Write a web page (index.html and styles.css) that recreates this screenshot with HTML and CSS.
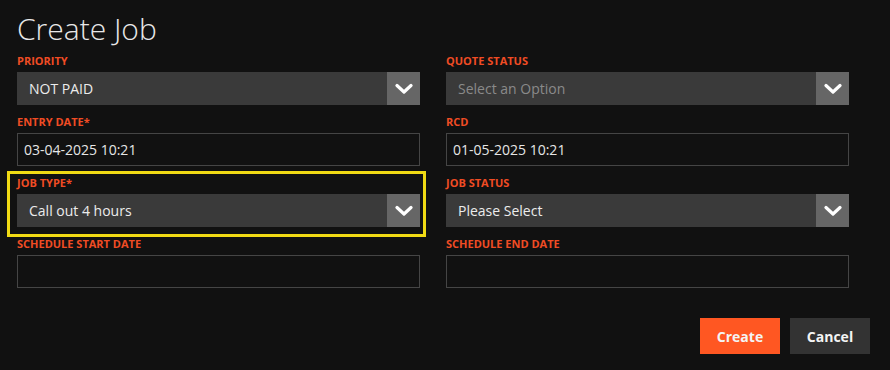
FILE: index.html
```html
<!DOCTYPE html>
<html lang="en">
<head>
    <meta charset="UTF-8">
    <meta name="viewport" content="width=device-width, initial-scale=1.0">
    <title>Create Job</title>
    <link rel="stylesheet" href="styles.css">
</head>
<body>
    <h1>Create Job</h1>
    <form class="job-form">
        <div class="fields">
            <div class="field">
                <label>PRIORITY</label>
                <div class="select-wrap">
                    <select><option>NOT PAID</option></select>
                    <span class="select-arrow"><svg width="18" height="12" viewBox="0 0 18 12"><path d="M2 2.5 L9 9 L16 2.5" fill="none" stroke="#fff" stroke-width="3.2" stroke-linecap="round" stroke-linejoin="round"/></svg></span>
                </div>
            </div>
            <div class="field">
                <label>QUOTE STATUS</label>
                <div class="select-wrap">
                    <select class="placeholder"><option>Select an Option</option></select>
                    <span class="select-arrow"><svg width="18" height="12" viewBox="0 0 18 12"><path d="M2 2.5 L9 9 L16 2.5" fill="none" stroke="#fff" stroke-width="3.2" stroke-linecap="round" stroke-linejoin="round"/></svg></span>
                </div>
            </div>
            <div class="field">
                <label>ENTRY DATE*</label>
                <input type="text" value="03-04-2025 10:21">
            </div>
            <div class="field">
                <label>RCD</label>
                <input type="text" value="01-05-2025 10:21">
            </div>
            <div class="field highlighted">
                <label>JOB TYPE*</label>
                <div class="select-wrap">
                    <select><option>Call out 4 hours</option></select>
                    <span class="select-arrow"><svg width="18" height="12" viewBox="0 0 18 12"><path d="M2 2.5 L9 9 L16 2.5" fill="none" stroke="#fff" stroke-width="3.2" stroke-linecap="round" stroke-linejoin="round"/></svg></span>
                </div>
            </div>
            <div class="field">
                <label>JOB STATUS</label>
                <div class="select-wrap">
                    <select><option>Please Select</option></select>
                    <span class="select-arrow"><svg width="18" height="12" viewBox="0 0 18 12"><path d="M2 2.5 L9 9 L16 2.5" fill="none" stroke="#fff" stroke-width="3.2" stroke-linecap="round" stroke-linejoin="round"/></svg></span>
                </div>
            </div>
            <div class="field">
                <label>SCHEDULE START DATE</label>
                <input type="text" value="">
            </div>
            <div class="field">
                <label>SCHEDULE END DATE</label>
                <input type="text" value="">
            </div>
        </div>
        <div class="actions">
            <button type="button" class="btn btn-create">Create</button>
            <button type="button" class="btn btn-cancel">Cancel</button>
        </div>
    </form>
</body>
</html>
```

FILE: styles.css
```css
body {
    margin: 0;
    padding: 8px 20px 0 17px;
    background-color: #111111;
    font-family: "Open Sans", Arial, sans-serif;
    color: #e6e6e6;
}
h1 {
    margin: 0;
    font-size: 30px;
    font-weight: 300;
    line-height: 41px;
    color: #e8e8e8;
}
.fields {
    margin-top: 4px;
    display: grid;
    grid-template-columns: 403px 403px;
    column-gap: 26px;
    row-gap: 9px;
}
.field {
    display: flex;
    flex-direction: column;
    position: relative;
}
.field label {
    font-size: 11px;
    font-weight: 700;
    line-height: 15px;
    color: #f04c24;
    margin-bottom: 4px;
}
.highlighted::before {
    content: "";
    position: absolute;
    left: -10px;
    right: -6px;
    top: -4px;
    bottom: -10px;
    border: 3px solid #f0da14;
    pointer-events: none;
}
.select-wrap {
    display: flex;
    height: 33px;
    background-color: #3a3a3a;
}
.select-wrap select {
    flex: 1;
    appearance: none;
    border: none;
    outline: none;
    background: transparent;
    color: #ececec;
    font-family: "Open Sans", Arial, sans-serif;
    font-size: 14px;
    padding: 0 12px;
}
.select-wrap select.placeholder {
    color: #8a8a8a;
}
.select-arrow {
    width: 33px;
    background-color: #666666;
    display: flex;
    align-items: center;
    justify-content: center;
}
.field input {
    height: 33px;
    box-sizing: border-box;
    background: transparent;
    border: 1px solid #454545;
    color: #e6e6e6;
    font-family: "Open Sans", Arial, sans-serif;
    font-size: 14px;
    padding: 0 6px;
    outline: none;
}
.actions {
    display: flex;
    justify-content: flex-end;
    gap: 10px;
    margin-top: 30px;
}
.btn {
    width: 80px;
    height: 36px;
    border: none;
    font-family: "Open Sans", Arial, sans-serif;
    font-size: 14px;
    font-weight: 700;
    color: #f4f4f4;
    cursor: pointer;
}
.btn-create {
    background-color: #ff5722;
}
.btn-cancel {
    background-color: #333333;
}
```
